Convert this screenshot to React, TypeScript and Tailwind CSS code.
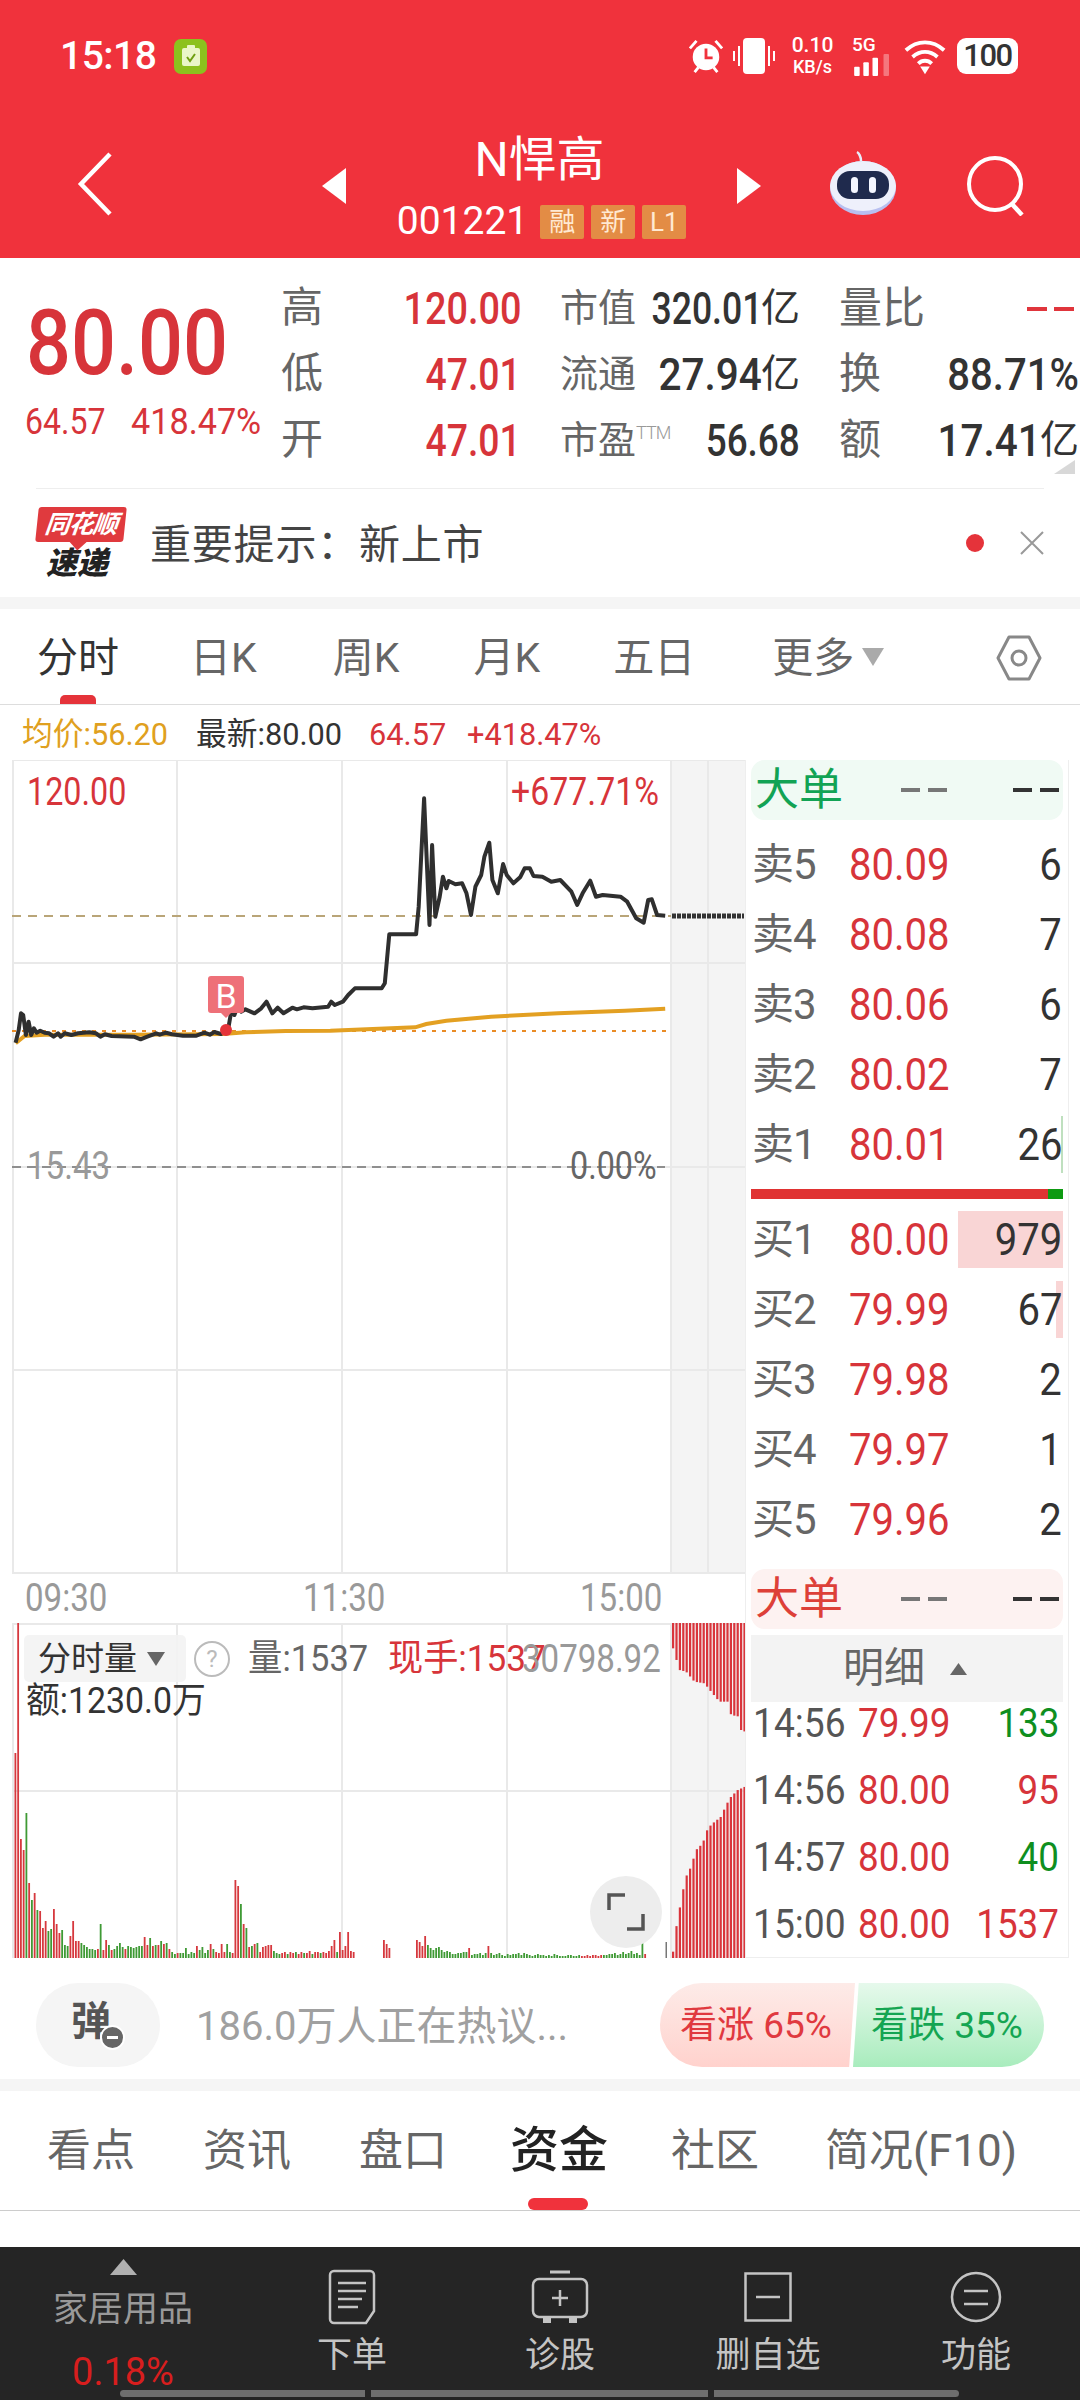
import React from 'react';

const RED = 'text-[#d7343a]';
const DARK = 'text-[#333333]';
const GRAY = 'text-[#666666]';

// price line, picked off the reference (x / 2.24, 740 + y / 3)
const priceLine = [
  35, 908, 42, 870, 47, 820, 52, 825, 58, 885, 64, 845, 70, 885, 76, 865, 82, 878, 90, 872, 100, 878, 110, 880, 120, 890,
  130, 880, 136, 890, 145, 880, 160, 885, 175, 880, 200, 877, 215, 880, 225, 890, 235, 883, 250, 888, 300, 890, 315, 898,
  330, 890, 350, 880, 358, 884, 372, 878, 385, 883, 410, 887, 440, 887, 458, 878, 470, 884, 480, 876, 495, 882, 506, 872,
  512, 860, 518, 815, 525, 825, 532, 800, 540, 815, 550, 808, 570, 820, 585, 805, 597, 785, 610, 820, 622, 803, 635, 820,
  655, 803, 665, 808, 680, 802, 700, 805, 735, 800, 742, 785, 750, 795, 768, 785, 780, 765, 795, 745, 855, 745, 862, 730,
  872, 583, 932, 583, 938, 500, 950, 175, 962, 555, 968, 315, 975, 530, 985, 470, 992, 410, 1000, 445, 1005, 423, 1020, 433,
  1035, 430, 1045, 460, 1055, 525, 1065, 440, 1078, 405, 1085, 350, 1096, 308, 1103, 420, 1115, 460, 1127, 372, 1135, 405,
  1150, 430, 1165, 412, 1175, 385, 1187, 385, 1195, 408, 1215, 410, 1235, 425, 1255, 420, 1280, 455, 1293, 495, 1305, 460,
  1322, 422, 1335, 470, 1350, 465, 1390, 470, 1405, 485, 1425, 535, 1442, 548, 1452, 480, 1460, 478, 1472, 525, 1490, 527,
];

const avgLine = [
  35, 910, 55, 888, 100, 884, 300, 884, 500, 882, 550, 877, 640, 873, 740, 872, 930, 862, 955, 852, 1000, 842, 1100, 830,
  1250, 820, 1400, 812, 1490, 806,
];

const toPoints = (raw: number[]) => {
  const out: string[] = [];
  for (let i = 0; i < raw.length; i += 2) {
    out.push(`${(raw[i] / 2.24).toFixed(1)},${(740 + raw[i + 1] / 3).toFixed(1)}`);
  }
  return out.join(' ');
};

// volume bars: red is positive, green negative
const volumeSegments: { start: number; bars: number[] }[] = [
  {
    start: 0,
    bars: [
      205, 335, 119, 108, -145, 75, -58, 65, -48, 47, 30, 37, -27, -29, 49, 34, 25, -28, -13, -12, 22, 37, 17, 17, -15, -13,
      -11, -9, -9, -8, 9, -34, 8, 18, -13, 8, -9, -12, -15, -11, 9, -12, -11, -10, -11, -12, -12, 21, 13, -20, 12, -13, 13,
      -17, 14, -15, 9, -6, -4, 5, -5, -5, -10, -4, -6, -5, 12, -8, -11, -5, -8, 14, -9, 6, 5, 14, 6, -14, -6, 5, 78, 72, -54,
      34, -30, 11, -12, 14, -15, 6, 11, 12, 13, 13, -7, -5, -4, 5, 6, -4, 6, 5, -6, 4, 6, -5, 5, 7, -4, 6, 6, -5, 6, 5, 7, 12,
      18, -6, 26, 8, 12, 26, 7, 6,
    ],
  },
  { start: 134, bars: [18, 14, 10] },
  {
    start: 146,
    bars: [
      18, 16, 12, 22, -13, -10, -8, -10, -11, -8, -6, -7, -6, -4, -4, -5, -5, -6, -6, 10, -3, -4, -4, -5, -3, -5, 12, -5, -3,
      -4, -5, -3, -2, -4, -3, -4, -4, -5, -3, -5, -4, -3, -2, -3, -4, -3, -3, -2, -3, -2, -4, -3, -2, -2, -2, -3, -3, -2, -2,
      -3, 2, 2, 3, 2, 3, 3, 2, 3, -3, -3, -4, -4, -5, -3, -4, -6, -4, -5, -7, -4, -5, -3, -15, 4,
    ],
  },
];

const lerp = (table: number[], x: number) => {
  for (let i = 0; i < table.length - 2; i += 2) {
    if (x <= table[i + 2]) {
      const t = (x - table[i]) / (table[i + 2] - table[i]);
      return table[i + 1] + (table[i + 3] - table[i + 1]) * Math.max(0, t);
    }
  }
  return table[table.length - 1];
};

const topCurve = [96, 265, 115, 330, 135, 335, 160, 365, 190, 370, 210, 395, 235, 425, 260, 425, 270, 465, 295, 470, 300, 510, 312, 515];
const bottomCurve = [96, 1175, 105, 1105, 115, 1050, 125, 995, 135, 950, 150, 920, 165, 870, 185, 850, 200, 805, 215, 790, 240, 770, 255, 735, 270, 710, 290, 690, 312, 680];

const afterBars = Array.from({ length: 22 }, (_, i) => 96 + i * 10.2);

const MainChart = () => (
  <svg viewBox="12 760 733 814" className="absolute inset-0 w-[733px] h-[814px]">
    <rect x="671" y="760" width="74" height="814" fill="#f4f4f4" />
    {[760, 963, 1167, 1370, 1573].map((y) => (
      <line key={y} x1="12" x2="745" y1={y} y2={y} stroke="#e9e9e9" strokeWidth="2" />
    ))}
    {[13, 177, 342, 507, 671, 708].map((x) => (
      <line key={x} x1={x} x2={x} y1="760" y2="1574" stroke="#e9e9e9" strokeWidth="2" />
    ))}
    <line x1="12" x2="671" y1="916" y2="916" stroke="#b9a578" strokeWidth="2" strokeDasharray="9 7" />
    <line x1="672" x2="744" y1="916" y2="916" stroke="#333" strokeWidth="5" strokeDasharray="4 1" />
    <line x1="12" x2="671" y1="1031" y2="1031" stroke="#e98b25" strokeWidth="2" strokeDasharray="4 6" />
    <line x1="12" x2="665" y1="1167" y2="1167" stroke="#8f8f8f" strokeWidth="2" strokeDasharray="9 6" />
    <polyline points={toPoints(avgLine)} fill="none" stroke="#e3a022" strokeWidth="4" />
    <polyline points={toPoints(priceLine)} fill="none" stroke="#2f2f2f" strokeWidth="4" strokeLinejoin="round" />
    <path d="M211 976h30a3 3 0 0 1 3 3v31a3 3 0 0 1-3 3h-10l-5 5-5-5h-10a3 3 0 0 1-3-3v-31a3 3 0 0 1 3-3z" fill="#ee7078" />
    <circle cx="226" cy="1030" r="6" fill="#e5333a" />
  </svg>
);

const VolumeChart = () => (
  <svg viewBox="12 1623 733 335" className="absolute inset-0 w-[733px] h-[335px]">
    <rect x="671" y="1623" width="74" height="335" fill="#f4f4f4" />
    <line x1="12" x2="745" y1="1791" y2="1791" stroke="#e9e9e9" strokeWidth="2" />
    <line x1="12" x2="745" y1="1624" y2="1624" stroke="#e9e9e9" strokeWidth="2" />
    {[13, 177, 342, 507, 671, 708].map((x) => (
      <line key={x} x1={x} x2={x} y1="1623" y2="1958" stroke="#e9e9e9" strokeWidth="2" />
    ))}
    {volumeSegments.map((seg) =>
      seg.bars.map((v, i) => {
        const x = 14.5 + (seg.start + i) * 2.75;
        const h = Math.abs(v);
        return <rect key={`${seg.start}-${i}`} x={x} y={1958 - h} width="1.8" height={h} fill={v > 0 ? '#d6383e' : '#3f9a35'} />;
      }),
    )}
    <rect x="665.5" y="1942" width="1.5" height="16" fill="#777" />
    {afterBars.map((zx) => {
      const x = 640 + zx / 3;
      const topH = lerp(topCurve, zx) / 3 - 63;
      const bottomTop = 1560 + lerp(bottomCurve, zx) / 3;
      return (
        <g key={zx}>
          <rect x={x} y="1623" width="2.2" height={topH} fill="#d9353c" />
          <rect x={x} y={bottomTop} width="2.2" height={1958 - bottomTop} fill="#d9353c" />
        </g>
      );
    })}
  </svg>
);

const DashPair = ({ color }: { color: string }) => (
  <span className="flex gap-[8px]">
    <span className={`block w-[19px] h-[4px] ${color}`} />
    <span className={`block w-[19px] h-[4px] ${color}`} />
  </span>
);

const BigOrderRow = ({ tone }: { tone: 'green' | 'red' }) => (
  <div
    className={`mx-[5px] h-[60px] shrink-0 rounded-[14px] flex items-center pl-[4px] pr-[4px] ${tone === 'green' ? 'bg-[#f0faf4]' : 'bg-[#fdf2f1]'}`}
  >
    <span className={`text-[44px] leading-none ${tone === 'green' ? 'text-[#12a354]' : 'text-[#dd4038]'}`}>大单</span>
    <span className="ml-[58px]">
      <DashPair color="bg-[#777777]" />
    </span>
    <span className="ml-auto">
      <DashPair color="bg-[#333333]" />
    </span>
  </div>
);

const askRows = [
  ['卖5', '80.09', '6'],
  ['卖4', '80.08', '7'],
  ['卖3', '80.06', '6'],
  ['卖2', '80.02', '7'],
  ['卖1', '80.01', '26'],
];

const bidRows = [
  ['买1', '80.00', '979'],
  ['买2', '79.99', '67'],
  ['买3', '79.98', '2'],
  ['买4', '79.97', '1'],
  ['买5', '79.96', '2'],
];

const OrderRow = ({ row, index, side }: { row: string[]; index: number; side: 'ask' | 'bid' }) => (
  <div className="relative h-[70px] shrink-0 flex items-center pl-[6px] pr-[6px]">
    {side === 'bid' && index === 0 && <span className="absolute right-[5px] top-[6px] w-[105px] h-[57px] bg-[#f9d5d5]" />}
    {side === 'bid' && index === 1 && <span className="absolute right-[5px] top-[6px] w-[7px] h-[57px] bg-[#f9d5d5]" />}
    {side === 'ask' && index === 4 && <span className="absolute right-[5px] top-[6px] w-[2px] h-[57px] bg-[#bfe0bf]" />}
    <span className={`relative w-[97px] text-[42px] leading-none tracking-[-1px] ${GRAY}`}>{row[0]}</span>
    <span className={`relative inline-block origin-left scale-x-[0.91] text-[44px] leading-none ${RED}`}>{row[1]}</span>
    <span className={`relative ml-auto inline-block origin-right scale-x-[0.91] text-[44px] leading-none ${DARK}`}>{row[2]}</span>
  </div>
);

const tradeRows = [
  ['14:56', '79.99', '133', 'text-[#0f8f1f]'],
  ['14:56', '80.00', '95', RED],
  ['14:57', '80.00', '40', 'text-[#0f8f1f]'],
  ['15:00', '80.00', '1537', RED],
];

const QuoteCell = ({
  label,
  value,
  unit,
  tone,
  fit,
}: {
  label: React.ReactNode;
  value?: string;
  unit?: string;
  tone: string;
  fit?: string;
}) => (
  <div className="flex justify-between items-center w-[240px] whitespace-nowrap">
    <span className={`flex items-center text-[38px] leading-none ${GRAY}`}>{label}</span>
    {value && (
      <span className={`-ml-[60px] flex items-center leading-none ${tone}`}>
        <span className={`inline-block origin-right text-[45px] font-medium ${fit}`}>{value}</span>
        {unit && <span className="text-[39px] -ml-[1px]">{unit}</span>}
      </span>
    )}
  </div>
);

const Robot = () => (
  <svg viewBox="0 0 72 66" className="w-[72px] h-[66px]">
    <path d="M34 11c0-4-2-8-4-9" fill="none" stroke="#e8ecfa" strokeWidth="2.5" />
    <ellipse cx="36" cy="38" rx="33" ry="27" fill="#b8bff0" />
    <ellipse cx="36" cy="36" rx="33" ry="25" fill="#eef0fb" />
    <rect x="10" y="21" width="52" height="28" rx="13" fill="#1f2a4d" />
    <rect x="24" y="27" width="7" height="16" rx="3.5" fill="#f4f6ff" />
    <rect x="42" y="27" width="7" height="16" rx="3.5" fill="#f4f6ff" />
  </svg>
);

const StatusIcons = () => (
  <div className="ml-auto flex items-center mr-[62px]">
    <svg viewBox="0 0 38 38" className="w-[36px] h-[38px]">
      <circle cx="19" cy="20" r="14" fill="#fff" />
      <path d="M19 11v10h7" fill="none" stroke="#f0323c" strokeWidth="3" />
      <path d="M2 11 9 3M36 11 29 3" stroke="#fff" strokeWidth="3" />
      <path d="m7 36 4-5M31 36l-4-5" stroke="#fff" strokeWidth="3" />
    </svg>
    <svg viewBox="0 0 42 38" className="w-[42px] h-[38px] ml-[9px]">
      <rect x="10" y="1" width="22" height="36" rx="4" fill="#fff" />
      <path d="M1 14v10M6 9v20M36 9v20M41 14v10" stroke="#fff" strokeWidth="2" />
    </svg>
    <div className="ml-[15px] w-[45px] text-white text-[21px] leading-[22px] font-medium text-center">
      <div>0.10</div>
      <div className="text-[18px]">KB/s</div>
    </div>
    <div className="ml-[17px] w-[41px] flex flex-col items-start">
      <span className="text-white text-[19px] leading-[18px] font-medium">5G</span>
      <svg viewBox="0 0 40 24" className="w-[41px] h-[22px]">
        <rect x="0" y="14" width="6" height="10" rx="1" fill="#fff" />
        <rect x="10" y="9" width="6" height="15" rx="1" fill="#fff" />
        <rect x="20" y="4" width="6" height="20" rx="1" fill="#fff" />
        <rect x="32" y="0" width="6" height="24" rx="1" fill="#ffffff55" />
      </svg>
    </div>
    <svg viewBox="0 0 46 38" className="w-[44px] h-[38px] ml-[10px]">
      <path d="M3 13C15 2 31 2 43 13" fill="none" stroke="#fff" strokeWidth="4" />
      <path d="M10 20c8-7 18-7 26 0" fill="none" stroke="#fff" strokeWidth="4" />
      <path d="M16 27c4-4 10-4 14 0" fill="none" stroke="#fff" strokeWidth="4" />
      <path d="m18 30h10l-5 8z" fill="#fff" />
    </svg>
    <div className="ml-[10px] w-[61px] h-[36px] rounded-[9px] bg-white flex items-center justify-center text-[#333] text-[31px] font-medium tracking-[-1.5px]">
      100
    </div>
  </div>
);

const BottomItem = ({ label, width, children }: { label: string; width: string; children: React.ReactNode }) => (
  <div className={`flex flex-col items-center ${width}`}>
    <div className="h-[56px] flex items-center justify-center">{children}</div>
    <span className="mt-[13px] text-[35px] leading-none text-[#c4c4c4]">{label}</span>
  </div>
);

const App = () => {
  return (
    <div className="w-[1080px] h-[2400px] overflow-hidden bg-white flex flex-col font-['Roboto','Noto_Sans_CJK_SC',sans-serif]">
      {/* status bar */}
      <div className="h-[90px] shrink-0 bg-[#f0323c] flex items-center pt-[22px] text-white">
        <span className="ml-[60px] text-[39px] font-medium leading-none tracking-[-0.5px]">15:18</span>
        <div className="ml-[18px] w-[33px] h-[35px] rounded-[7px] bg-[#8cc11e] flex items-center justify-center">
          <svg viewBox="0 0 20 22" className="w-[20px] h-[22px]">
            <rect x="1" y="3" width="18" height="18" rx="2" fill="#eaf6c8" />
            <rect x="6" y="0" width="8" height="5" rx="1" fill="#eaf6c8" />
            <path d="m6 12 3 4 5-7" fill="none" stroke="#6f9f10" strokeWidth="2" />
          </svg>
        </div>
        <StatusIcons />
      </div>

      {/* stock header */}
      <div className="h-[168px] shrink-0 bg-[#f0323c] flex items-start text-white">
        <svg viewBox="0 0 36 64" className="ml-[77px] mt-[62px] w-[36px] h-[64px]">
          <path d="M33 2 4 32l29 30" fill="none" stroke="#fff" strokeWidth="4.5" />
        </svg>
        <svg viewBox="0 0 24 36" className="ml-[209px] mt-[78px] w-[24px] h-[36px]">
          <path d="M24 0v36L0 18z" fill="#fff" />
        </svg>
        <div className="w-[391px] flex flex-col items-center">
          <span className="mt-[43px] pr-[4px] text-[48px] leading-[54px]">N悍高</span>
          <div className="mt-[15px] flex items-center">
            <span className="text-[39px] leading-none">001221</span>
            <span className="ml-[12px] w-[44px] h-[34px] bg-[#e38c45] rounded-[2px] flex items-center justify-center text-[26px] leading-none text-[#ffe9d2]">融</span>
            <span className="ml-[7px] w-[44px] h-[34px] bg-[#e38c45] rounded-[2px] flex items-center justify-center text-[26px] leading-none text-[#ffe9d2]">新</span>
            <span className="ml-[7px] w-[44px] h-[34px] bg-[#e38c45] rounded-[2px] flex items-center justify-center text-[26px] leading-none text-[#ffe9d2]">L1</span>
          </div>
        </div>
        <svg viewBox="0 0 24 36" className="mt-[78px] w-[24px] h-[36px]">
          <path d="M0 0v36l24-18z" fill="#fff" />
        </svg>
        <div className="ml-[66px] mt-[60px]">
          <Robot />
        </div>
        <svg viewBox="0 0 60 60" className="ml-[68px] mt-[66px] w-[60px] h-[60px]">
          <circle cx="28" cy="28" r="26" fill="none" stroke="#fff" strokeWidth="4" />
          <path d="m44 47 11 12" stroke="#fff" strokeWidth="4.5" />
        </svg>
      </div>

      {/* quote */}
      <div className="relative h-[231px] shrink-0 flex items-start">
        <div className="w-[281px] shrink-0 flex flex-col">
          <span className={`mt-[37px] ml-[26px] inline-block origin-left scale-x-[0.87] text-[91px] leading-[96px] font-medium ${RED}`}>80.00</span>
          <div className={`mt-[13px] ml-[25px] flex text-[36px] leading-none ${RED}`}>
            <span className="w-[106px] inline-block origin-left scale-x-[0.89]">64.57</span>
            <span className="inline-block origin-left scale-x-[0.95] whitespace-nowrap">418.47%</span>
          </div>
        </div>
        <div className="pt-[17px] flex flex-col">
          <div className="h-[66px] flex items-center gap-[39px]">
            <QuoteCell label={<span className="text-[42px]">高</span>} value="120.00" tone={RED} fit="scale-x-[0.84]" />
            <QuoteCell label="市值" value="320.01" unit="亿" tone={DARK} fit="scale-x-[0.79]" />
            <div className="relative">
              <QuoteCell label={<span className="text-[43px]">量比</span>} tone={DARK} />
              <span className="absolute right-[5px] top-[20px] flex gap-[7px]">
                <span className="block w-[20px] h-[4px] bg-[#e0353c]" />
                <span className="block w-[20px] h-[4px] bg-[#e0353c]" />
              </span>
            </div>
          </div>
          <div className="h-[66px] flex items-center gap-[39px]">
            <QuoteCell label={<span className="text-[42px]">低</span>} value="47.01" tone={RED} fit="scale-x-[0.83]" />
            <QuoteCell label="流通" value="27.94" unit="亿" tone={DARK} fit="scale-x-[0.9]" />
            <QuoteCell label={<span className="text-[42px]">换</span>} value="88.71%" tone={DARK} fit="scale-x-[0.89]" />
          </div>
          <div className="h-[66px] flex items-center gap-[39px]">
            <QuoteCell label={<span className="text-[42px]">开</span>} value="47.01" tone={RED} fit="scale-x-[0.83]" />
            <QuoteCell
              label={
                <>
                  市盈
                  <span className="text-[18px] leading-none font-light text-[#999999] -mt-[14px] tracking-[-1px]">TTM</span>
                </>
              }
              value="56.68"
              tone={DARK}
              fit="scale-x-[0.82]"
            />
            <QuoteCell label={<span className="text-[42px]">额</span>} value="17.41" unit="亿" tone={DARK} fit="scale-x-[0.9]" />
          </div>
        </div>
        <svg viewBox="0 0 21 14" className="absolute right-[5px] top-[202px] w-[21px] h-[14px]">
          <path d="M21 0v14H0z" fill="#d8d8d8" />
        </svg>
        <div className="absolute left-[36px] right-[36px] bottom-0 h-[1px] bg-[#eeeeee]" />
      </div>

      {/* notice */}
      <div className="h-[108px] shrink-0 flex items-center">
        <div className="ml-[37px] w-[88px] h-[72px] flex flex-col items-center">
          <div className="relative w-[88px] h-[39px] bg-[#e03a3e] rounded-[3px] -skew-x-6 flex items-center justify-center">
            <span className="text-white text-[25px] leading-none font-bold italic tracking-[-1px]">同花顺</span>
            <span className="absolute -bottom-[6px] left-[37px] w-[12px] h-[12px] bg-[#e03a3e] rotate-45" />
          </div>
          <span className="mt-[6px] -ml-[8px] text-[#222222] text-[31px] leading-none font-black italic">速递</span>
        </div>
        <span className="ml-[25px] mt-[4px] text-[41px] leading-none text-[#444444] tracking-[0.8px]">重要提示：新上市</span>
        <span className="ml-auto w-[18px] h-[18px] rounded-full bg-[#e5333a]" />
        <svg viewBox="0 0 24 24" className="ml-[36px] mr-[36px] w-[24px] h-[24px]">
          <path d="m1 1 22 22M23 1 1 23" stroke="#999" strokeWidth="2" />
        </svg>
      </div>
      <div className="h-[12px] shrink-0 bg-[#f5f5f5]" />

      {/* chart period tabs */}
      <div className="relative h-[96px] shrink-0 border-b border-[#dddddd] flex items-center pt-[4px] pl-[37px] text-[41px] leading-none text-[#666666]">
        <span className="text-[41px] text-[#333333]">分时</span>
        <span className="ml-[71px]">日K</span>
        <span className="ml-[76px]">周K</span>
        <span className="ml-[74px]">月K</span>
        <span className="ml-[73px]">五日</span>
        <span className="ml-[77px]">更多</span>
        <svg viewBox="0 0 22 18" className="ml-[8px] -mt-[4px] w-[22px] h-[18px]">
          <path d="M0 0h22L11 18z" fill="#aaaaaa" />
        </svg>
        <svg viewBox="0 0 48 48" className="ml-[111px] -mt-[2px] w-[48px] h-[48px]">
          <path d="M14 3h20l11 21-11 21H14L3 24z" fill="none" stroke="#888" strokeWidth="3" strokeLinejoin="round" />
          <circle cx="24" cy="24" r="7" fill="none" stroke="#888" strokeWidth="3" />
        </svg>
        <span className="absolute left-[60px] bottom-0 w-[36px] h-[9px] rounded-t-[5px] bg-[#e5333a]" />
      </div>

      {/* latest tick line */}
      <div className="h-[55px] shrink-0 flex items-center pl-[22px] pt-[2px] text-[32px] leading-none">
        <span className="w-[174px] inline-block origin-left scale-x-[0.96] text-[#e0a020]">均价:56.20</span>
        <span className="w-[173px] inline-block origin-left scale-x-[0.96] text-[#333333]">最新:80.00</span>
        <span className={`w-[98px] inline-block origin-left scale-x-[0.96] ${RED}`}>64.57</span>
        <span className={`inline-block origin-left scale-x-[0.96] ${RED}`}>+418.47%</span>
      </div>

      {/* charts and order book */}
      <div className="h-[1198px] shrink-0 flex">
        <div className="ml-[12px] w-[733px] shrink-0 flex flex-col">
          <div className="relative h-[814px]">
            <MainChart />
            <span className={`absolute left-[15px] top-[13px] origin-left scale-x-[0.85] text-[38px] leading-none ${RED}`}>120.00</span>
            <span className={`absolute left-[499px] top-[13px] origin-left scale-x-[0.89] text-[38px] leading-none ${RED}`}>+677.71%</span>
            <span className="absolute left-[196px] top-[218px] w-[36px] text-center text-[34px] leading-[36px] text-white">B</span>
            <span className="absolute left-[15px] top-[387px] origin-left scale-x-[0.87] text-[38px] leading-none text-[#999999]">15.43</span>
            <span className="absolute left-[558px] top-[387px] origin-left scale-x-[0.85] text-[38px] leading-none text-[#666666]">0.00%</span>
          </div>
          <div className="relative h-[49px] text-[38px] leading-none text-[#999999]">
            <span className="absolute left-[13px] top-[5px] origin-left scale-x-[0.87]">09:30</span>
            <span className="absolute left-[291px] top-[5px] origin-left scale-x-[0.87]">11:30</span>
            <span className="absolute left-[568px] top-[5px] origin-left scale-x-[0.87]">15:00</span>
          </div>
          <div className="relative h-[335px]">
            <VolumeChart />
            <div className="absolute left-[12px] top-[12px] w-[162px] h-[47px] rounded-[5px] bg-[#f3f3f3]/90 flex items-center pl-[14px] text-[33px] leading-none text-[#333333]">
              分时量
              <svg viewBox="0 0 18 14" className="ml-[10px] w-[18px] h-[14px]">
                <path d="M0 0h18L9 14z" fill="#666" />
              </svg>
            </div>
            <div className="absolute left-[182px] top-[18px] w-[36px] h-[36px] rounded-full border-2 border-[#bbbbbb] flex items-center justify-center text-[24px] leading-none text-[#bbbbbb]">
              ?
            </div>
            <span className={`absolute left-[236px] top-[17px] origin-left scale-x-[0.93] text-[37px] leading-none ${GRAY}`}>量:1537</span>
            <span className={`absolute left-[376px] top-[17px] origin-left scale-x-[0.95] text-[37px] leading-none ${RED}`}>现手:1537</span>
            <span className="absolute left-[510px] top-[17px] origin-left scale-x-[0.87] text-[38px] leading-none text-[#999999]">30798.92</span>
            <span className={`absolute left-[14px] top-[60px] origin-left scale-x-[0.94] text-[36px] leading-none ${DARK}`}>额:1230.0万</span>
            <div className="absolute left-[578px] top-[253px] w-[72px] h-[72px] rounded-full bg-[#ededed] flex items-center justify-center">
              <svg viewBox="0 0 38 38" className="w-[38px] h-[38px]">
                <path d="M2 17V2h16M36 21v15H20" fill="none" stroke="#555" strokeWidth="3.5" />
              </svg>
            </div>
          </div>
        </div>

        <div className="w-[324px] shrink-0 flex flex-col border-l border-r border-b border-[#eeeeee]">
          <BigOrderRow tone="green" />
          <div className="h-[10px] shrink-0" />
          {askRows.map((row, i) => (
            <OrderRow key={row[0]} row={row} index={i} side="ask" />
          ))}
          <div className="mx-[5px] mt-[9px] h-[10px] shrink-0 flex">
            <span className="w-[297px] bg-[#e03232]" />
            <span className="flex-1 bg-[#0e9a12]" />
          </div>
          <div className="h-[6px] shrink-0" />
          {bidRows.map((row, i) => (
            <OrderRow key={row[0]} row={row} index={i} side="bid" />
          ))}
          <div className="h-[14px] shrink-0" />
          <BigOrderRow tone="red" />
          <div className="mt-[6px] mx-[5px] h-[67px] shrink-0 bg-[#f3f3f3] flex items-center pl-[92px] text-[41px] leading-none text-[#666666]">
            明细
            <svg viewBox="0 0 17 12" className="ml-[25px] w-[17px] h-[12px]">
              <path d="M8.5 0 17 12H0z" fill="#666" />
            </svg>
          </div>
          <div className="-mt-[12px] flex flex-col">
            {tradeRows.map((row, i) => (
              <div key={i} className="h-[67px] shrink-0 flex items-center pl-[7px] pr-[9px] text-[40px] leading-none">
                <span className="w-[105px] inline-block origin-left scale-x-[0.93] text-[#555555]">{row[0]}</span>
                <span className={`inline-block origin-left scale-x-[0.92] ${RED}`}>{row[1]}</span>
                <span className={`ml-auto inline-block origin-right scale-x-[0.92] ${row[3]}`}>{row[2]}</span>
              </div>
            ))}
          </div>
        </div>
      </div>

      {/* comment and sentiment */}
      <div className="h-[121px] shrink-0 flex items-start pt-[25px]">
        <div className="relative ml-[36px] w-[124px] h-[84px] rounded-[42px] bg-[#f5f5f5] flex items-center pl-[35px] pb-[6px]">
          <span className="text-[40px] leading-none font-bold text-[#555555]">弹</span>
          <span className="absolute left-[64px] top-[42px] w-[25px] h-[25px] rounded-full bg-[#666666] border-2 border-white flex items-center justify-center">
            <span className="block w-[11px] h-[3px] bg-white" />
          </span>
        </div>
        <span className="ml-[36px] h-[84px] pt-[3px] flex items-center text-[40px] leading-none text-[#a0a0a0]">186.0万人正在热议...</span>
        <div className="ml-auto mr-[36px] flex w-[384px] h-[84px]">
          <div className="w-[195px] h-[84px] rounded-l-[42px] bg-gradient-to-b from-[#fdebe8] to-[#ffd2cd] flex items-center pl-[20px] text-[37px] leading-none text-[#e0393f] whitespace-nowrap [clip-path:polygon(0_0,100%_0,97%_100%,0_100%)]">
            看涨 65%
          </div>
          <div className="w-[191px] -ml-[2px] h-[84px] rounded-r-[42px] bg-gradient-to-b from-[#e6f9ec] to-[#a8ecbd] flex items-center pl-[18px] text-[37px] leading-none text-[#14a552] whitespace-nowrap [clip-path:polygon(3%_0,100%_0,100%_100%,0_100%)]">
            看跌 35%
          </div>
        </div>
      </div>
      <div className="h-[12px] shrink-0 bg-[#f5f5f5]" />

      {/* detail tabs */}
      <div className="relative h-[120px] shrink-0 border-b border-[#cccccc] flex items-center pl-[47px] text-[44px] leading-none text-[#666666]">
        <span>看点</span>
        <span className="ml-[68px]">资讯</span>
        <span className="ml-[68px]">盘口</span>
        <span className="ml-[63px] text-[49px] font-medium text-[#222222]">资金</span>
        <span className="ml-[63px]">社区</span>
        <span className="ml-[66px]">简况(F10)</span>
        <span className="absolute left-[528px] bottom-0 w-[60px] h-[12px] rounded-[6px] bg-[#f0323c]" />
      </div>
      <div className="h-[36px] shrink-0" />

      {/* bottom bar */}
      <div className="relative h-[153px] shrink-0 bg-[#252525] flex items-start">
        <div className="w-[246px] flex flex-col items-center shrink-0">
          <svg viewBox="0 0 27 16" className="mt-[12px] w-[27px] h-[16px]">
            <path d="M13.5 0 27 16H0z" fill="#b0b0b0" />
          </svg>
          <span className="mt-[17px] text-[35px] leading-none text-[#999999]">家居用品</span>
          <span className="mt-[26px] text-[38px] leading-none text-[#d81e1e]">0.18%</span>
        </div>
        <div className="pt-[22px] flex">
          <BottomItem label="下单" width="w-[212px]">
            <svg viewBox="0 0 48 56" className="w-[48px] h-[56px]">
              <path d="M6 2h36a4 4 0 0 1 4 4v36l-8 12H6a4 4 0 0 1-4-4V6a4 4 0 0 1 4-4z" fill="none" stroke="#c4c4c4" strokeWidth="2.5" />
              <path d="M10 14h28M10 22h28M10 30h24M10 38h20" stroke="#c4c4c4" strokeWidth="2.5" />
            </svg>
          </BottomItem>
          <BottomItem label="诊股" width="w-[204px]">
            <svg viewBox="0 0 58 54" className="w-[58px] h-[54px]">
              <path d="M19 2h20" stroke="#c4c4c4" strokeWidth="3" />
              <rect x="2" y="9" width="54" height="38" rx="6" fill="none" stroke="#c4c4c4" strokeWidth="2.5" />
              <path d="M12 47v6h8v-6M38 47v6h8v-6" fill="#c4c4c4" />
              <path d="M29 20v16M21 28h16" stroke="#c4c4c4" strokeWidth="2.5" />
            </svg>
          </BottomItem>
          <BottomItem label="删自选" width="w-[212px]">
            <svg viewBox="0 0 48 50" className="w-[48px] h-[50px]">
              <rect x="1.5" y="1.5" width="45" height="47" fill="none" stroke="#c4c4c4" strokeWidth="2.5" />
              <path d="M12 25h24" stroke="#c4c4c4" strokeWidth="2.5" />
            </svg>
          </BottomItem>
          <BottomItem label="功能" width="w-[204px]">
            <svg viewBox="0 0 52 52" className="w-[52px] h-[52px]">
              <circle cx="26" cy="26" r="24" fill="none" stroke="#c4c4c4" strokeWidth="2.5" />
              <path d="M14 20h24M14 33h24" stroke="#c4c4c4" strokeWidth="2.5" />
            </svg>
          </BottomItem>
        </div>
        <div className="absolute left-[120px] top-[143px] flex gap-[6px] h-[7px]">
          <span className="w-[245px] rounded-l-full bg-[#6e6e6e]" />
          <span className="w-[337px] bg-[#6e6e6e]" />
          <span className="w-[245px] rounded-r-full bg-[#6e6e6e]" />
        </div>
      </div>
    </div>
  );
};

export default App;
